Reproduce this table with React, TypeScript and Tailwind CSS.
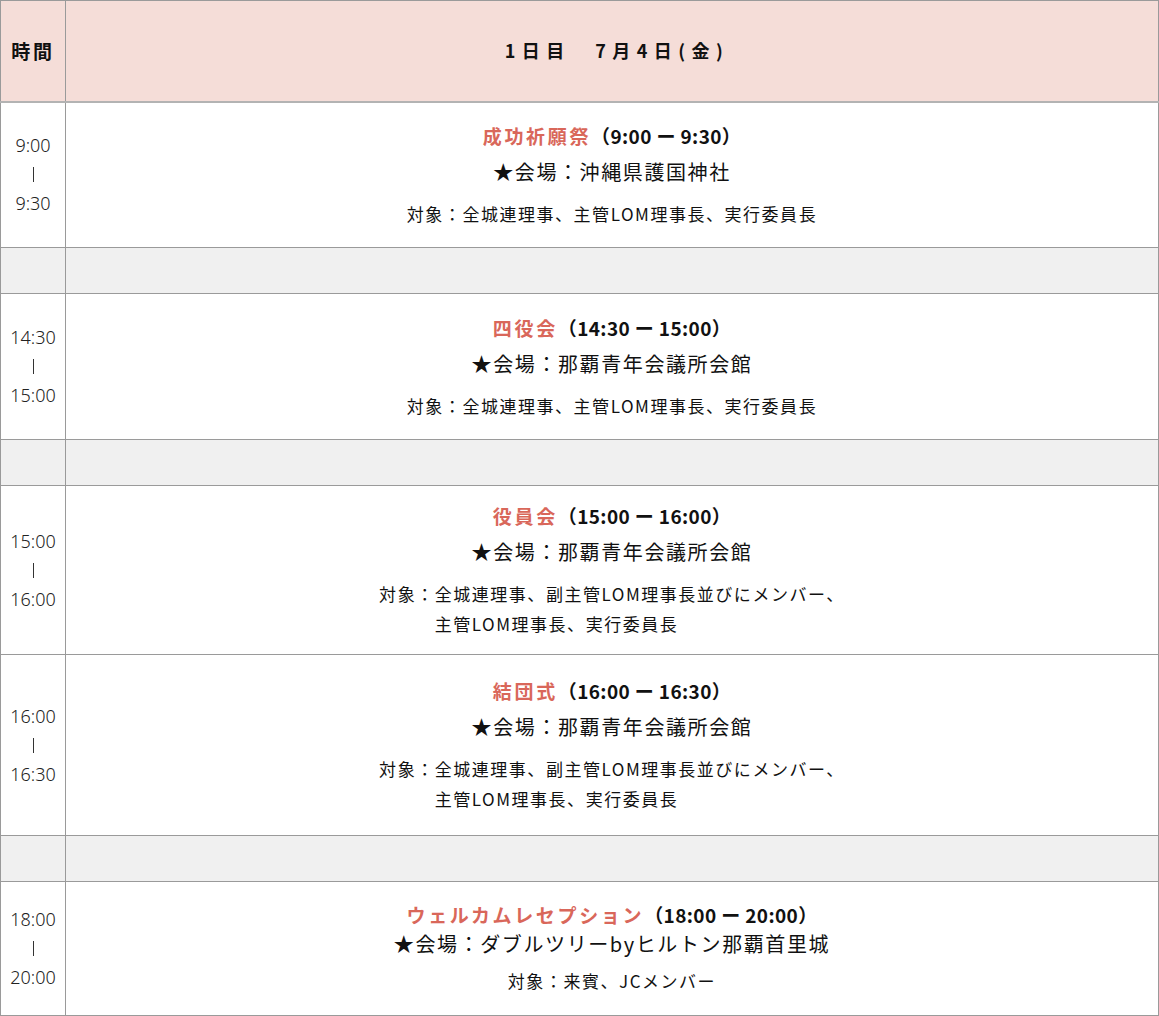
const jp = "font-['Noto_Sans_CJK_JP','Noto_Sans',sans-serif]";

type Item = {
  start: string;
  end: string;
  title: string;
  time: string;
  venue: string;
  target: string[];
  h: string;
  tight?: boolean;
};

const items: (Item | null)[] = [
  {
    start: "9:00",
    end: "9:30",
    title: "成功祈願祭",
    time: "（9:00 ー 9:30）",
    venue: "★会場：沖縄県護国神社",
    target: ["対象：全城連理事、主管LOM理事長、実行委員長"],
    h: "h-[146px]",
  },
  null,
  {
    start: "14:30",
    end: "15:00",
    title: "四役会",
    time: "（14:30 ー 15:00）",
    venue: "★会場：那覇青年会議所会館",
    target: ["対象：全城連理事、主管LOM理事長、実行委員長"],
    h: "h-[146px]",
  },
  null,
  {
    start: "15:00",
    end: "16:00",
    title: "役員会",
    time: "（15:00 ー 16:00）",
    venue: "★会場：那覇青年会議所会館",
    target: ["全城連理事、副主管LOM理事長並びにメンバー、", "主管LOM理事長、実行委員長"],
    h: "h-[169px]",
  },
  {
    start: "16:00",
    end: "16:30",
    title: "結団式",
    time: "（16:00 ー 16:30）",
    venue: "★会場：那覇青年会議所会館",
    target: ["全城連理事、副主管LOM理事長並びにメンバー、", "主管LOM理事長、実行委員長"],
    h: "h-[181px]",
  },
  null,
  {
    start: "18:00",
    end: "20:00",
    title: "ウェルカムレセプション",
    time: "（18:00 ー 20:00）",
    venue: "★会場：ダブルツリーbyヒルトン那覇首里城",
    target: ["対象：来賓、JCメンバー"],
    h: "h-[134px]",
    tight: true,
  },
];

function Target({ lines, tight }: { lines: string[]; tight?: boolean }) {
  const base = `${tight ? "mt-[7px]" : "mt-[10px]"} text-[17px] leading-[30px] tracking-[0.09em]`;
  if (lines.length === 1) {
    return <p className={base}>{lines[0]}</p>;
  }
  return (
    <div className={`${base} flex`}>
      <span className="whitespace-nowrap">対象：</span>
      <div className="text-left">
        {lines.map((l) => (
          <p key={l} className="whitespace-nowrap">{l}</p>
        ))}
      </div>
    </div>
  );
}

export default function App() {
  return (
    <div className={`${jp} w-[1159px] bg-white text-[#111]`}>
      <table className="w-[1159px] table-fixed border-collapse border border-[#858585]">
        <thead>
          <tr className="h-[101px] bg-[#f5ddd8]">
            <th className="w-[65px] border border-b-2 border-[#9a9a9a] border-b-[#b3b3b3] text-[19px] font-bold tracking-[0.15em]">
              時間
            </th>
            <th className="border border-b-2 border-[#9a9a9a] border-b-[#b3b3b3] pl-[10px] text-[18px] font-bold tracking-[0.36em]">
              1日目　7月4日(金)
            </th>
          </tr>
        </thead>
        <tbody>
          {items.map((it, i) =>
            it ? (
              <tr key={i} className={it.h}>
                <td className="border border-[#9a9a9a] text-center font-['Noto_Sans',sans-serif] text-[18px] font-light leading-[29px] text-[#222]">
                  <p>{it.start}</p>
                  <p className="flex h-[29px] items-center justify-center">
                    <span className="block h-[15px] w-px bg-[#333]" />
                  </p>
                  <p>{it.end}</p>
                </td>
                <td className="border border-[#9a9a9a] text-center">
                  <div className={`flex flex-col items-center ${it.tight ? "" : "pb-[4px]"}`}>
                    <p className={`text-[19px] font-bold ${it.tight ? "leading-[28px]" : "leading-[38px]"}`}>
                      <span className="tracking-[0.14em] text-[#d9675a]">{it.title}</span>
                      <span className="tracking-[0.02em]">{it.time}</span>
                    </p>
                    <p className={`text-[20px] tracking-[0.08em] ${it.tight ? "leading-[30px]" : "leading-[34px]"}`}>
                      {it.venue}
                    </p>
                    <Target lines={it.target} tight={it.tight} />
                  </div>
                </td>
              </tr>
            ) : (
              <tr key={i} className="h-[46px] bg-[#f0f0f0]">
                <td className="border border-[#9a9a9a]" />
                <td className="border border-[#9a9a9a]" />
              </tr>
            )
          )}
        </tbody>
      </table>
    </div>
  );
}
